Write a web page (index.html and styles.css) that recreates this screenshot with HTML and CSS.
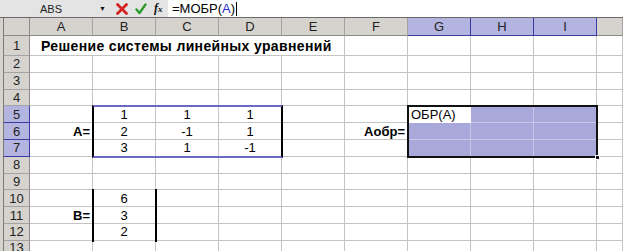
FILE: index.html
```html
<!DOCTYPE html>
<html>
<head>
    <title>Решение системы линейных уравнений</title>
    <link rel="stylesheet" href="styles.css">
</head>
<body>
    <div class="app">
        <!-- Formula bar -->
        <div class="formula-bar">
            <div class="name-box">ABS</div>
            <span class="drop">&#9660;</span>
            <svg class="btn-icon" width="12" height="12" viewBox="0 0 12 12">
                <path d="M1.5 1.5 L10.5 10.5 M10.5 1.5 L1.5 10.5" stroke="#d42222" stroke-width="2.8" stroke-linecap="round"/>
            </svg>
            <svg class="btn-icon" width="12" height="12" viewBox="0 0 12 12">
                <path d="M1.5 6.5 L4.5 10 L10.5 1.5" stroke="#2c9a2c" stroke-width="2.4" fill="none" stroke-linecap="round" stroke-linejoin="round"/>
            </svg>
            <span class="fx">f<small>x</small></span>
            <div class="formula">=МОБР(<span class="ref">A</span>)<span class="caret"></span></div>
        </div>

        <!-- Sheet -->
        <div class="sheet">
            <div class="grid">
                <div class="hdr corner"></div>
                <div class="hdr col">A</div>
                <div class="hdr col">B</div>
                <div class="hdr col">C</div>
                <div class="hdr col">D</div>
                <div class="hdr col">E</div>
                <div class="hdr col">F</div>
                <div class="hdr col active">G</div>
                <div class="hdr col active">H</div>
                <div class="hdr col active">I</div>
                <div class="hdr col"></div>

                <div class="hdr row">1</div>
                <div class="cell title">Решение системы линейных уравнений</div>
                <div class="cell"></div><div class="cell"></div><div class="cell"></div><div class="cell"></div><div class="cell"></div>

                <div class="hdr row">2</div>
                <div class="cell"></div><div class="cell"></div><div class="cell"></div><div class="cell"></div><div class="cell"></div>
                <div class="cell"></div><div class="cell"></div><div class="cell"></div><div class="cell"></div><div class="cell"></div>

                <div class="hdr row">3</div>
                <div class="cell"></div><div class="cell"></div><div class="cell"></div><div class="cell"></div><div class="cell"></div>
                <div class="cell"></div><div class="cell"></div><div class="cell"></div><div class="cell"></div><div class="cell"></div>

                <div class="hdr row">4</div>
                <div class="cell"></div><div class="cell"></div><div class="cell"></div><div class="cell"></div><div class="cell"></div>
                <div class="cell"></div><div class="cell"></div><div class="cell"></div><div class="cell"></div><div class="cell"></div>

                <div class="hdr row active">5</div>
                <div class="cell"></div>
                <div class="cell num">1</div><div class="cell num">1</div><div class="cell num">1</div>
                <div class="cell"></div><div class="cell"></div>
                <div class="cell current">ОБР(A)</div><div class="cell sel"></div><div class="cell sel"></div>
                <div class="cell"></div>

                <div class="hdr row active">6</div>
                <div class="cell label">A=</div>
                <div class="cell num">2</div><div class="cell num">-1</div><div class="cell num">1</div>
                <div class="cell"></div>
                <div class="cell label">Аобр=</div>
                <div class="cell sel"></div><div class="cell sel"></div><div class="cell sel"></div>
                <div class="cell"></div>

                <div class="hdr row active">7</div>
                <div class="cell"></div>
                <div class="cell num">3</div><div class="cell num">1</div><div class="cell num">-1</div>
                <div class="cell"></div><div class="cell"></div>
                <div class="cell sel"></div><div class="cell sel"></div><div class="cell sel"></div>
                <div class="cell"></div>

                <div class="hdr row">8</div>
                <div class="cell"></div><div class="cell"></div><div class="cell"></div><div class="cell"></div><div class="cell"></div>
                <div class="cell"></div><div class="cell"></div><div class="cell"></div><div class="cell"></div><div class="cell"></div>

                <div class="hdr row">9</div>
                <div class="cell"></div><div class="cell"></div><div class="cell"></div><div class="cell"></div><div class="cell"></div>
                <div class="cell"></div><div class="cell"></div><div class="cell"></div><div class="cell"></div><div class="cell"></div>

                <div class="hdr row">10</div>
                <div class="cell"></div><div class="cell num">6</div><div class="cell"></div><div class="cell"></div><div class="cell"></div>
                <div class="cell"></div><div class="cell"></div><div class="cell"></div><div class="cell"></div><div class="cell"></div>

                <div class="hdr row">11</div>
                <div class="cell label">B=</div><div class="cell num">3</div><div class="cell"></div><div class="cell"></div><div class="cell"></div>
                <div class="cell"></div><div class="cell"></div><div class="cell"></div><div class="cell"></div><div class="cell"></div>

                <div class="hdr row">12</div>
                <div class="cell"></div><div class="cell num">2</div><div class="cell"></div><div class="cell"></div><div class="cell"></div>
                <div class="cell"></div><div class="cell"></div><div class="cell"></div><div class="cell"></div><div class="cell"></div>

                <div class="hdr row last">13</div>
                <div class="cell"></div><div class="cell"></div><div class="cell"></div><div class="cell"></div><div class="cell"></div>
                <div class="cell"></div><div class="cell"></div><div class="cell"></div><div class="cell"></div><div class="cell"></div>
            </div>

            <!-- Borders and selection drawn over the cells -->
            <div class="overlay">
                <div class="box matrix-a"></div>
                <div class="box vector-b"></div>
                <div class="box selection"><span class="handle"></span></div>
            </div>
        </div>
    </div>
</body>
</html>
```

FILE: styles.css
```css
/* Reset */
* {
    margin: 0;
    padding: 0;
    box-sizing: border-box;
}

html, body {
    width: 100%;
    height: 100%;
    overflow: hidden;
    background: #ffffff;
    font-family: "Liberation Sans", Arial, sans-serif;
    color: #000;
}

.app {
    display: flex;
    flex-direction: column;
    height: 100%;
}

/* Formula bar */
.formula-bar {
    height: 17px;
    display: flex;
    align-items: center;
    background: #e4e4e4;
    flex-shrink: 0;
}

.name-box {
    width: 99px;
    padding-left: 40px;
    font-size: 11px;
    color: #222;
}

.drop {
    font-size: 7px;
    color: #111;
    width: 17px;
}

.btn-icon {
    margin-right: 7px;
}

.fx {
    font-family: "Liberation Serif", serif;
    font-style: italic;
    font-weight: bold;
    font-size: 12px;
    width: 14px;
    color: #111;
}

.fx small {
    font-size: 9px;
}

.formula {
    flex: 1;
    height: 100%;
    background: #ffffff;
    font-size: 13px;
    line-height: 17px;
    padding-left: 4px;
    display: flex;
    align-items: center;
}

.formula .ref {
    color: #2a2ad0;
}

.caret {
    width: 1px;
    height: 14px;
    background: #000;
    margin-left: 1px;
}

/* Sheet */
.sheet {
    flex: 1;
    position: relative;
    border-top: 1px solid #6a6a6a;
    background: #d6d3ce;
}

.grid,
.overlay {
    display: grid;
    grid-template-columns: 27px repeat(9, 63px) 1fr;
    grid-template-rows: 18px 20px repeat(11, 16.8px) 1fr;
    padding-left: 3px;
    height: 100%;
}

.overlay {
    position: absolute;
    inset: 0;
    pointer-events: none;
}

.hdr {
    background: #d6d3ce;
    font-size: 13px;
    color: #222;
    display: flex;
    align-items: center;
    justify-content: center;
}

.hdr.corner {
    border-left: 1px solid #7a7a7a;
    border-right: 1px solid #8a8a8a;
    border-bottom: 1px solid #8a8a8a;
}

.hdr.col {
    border-right: 1px solid #a3a3a3;
    border-bottom: 1px solid #8a8a8a;
}

.hdr.row {
    border-left: 1px solid #7a7a7a;
    border-right: 1px solid #8a8a8a;
    border-bottom: 1px solid #a3a3a3;
}

.hdr.row.last {
    align-items: flex-start;
    padding-top: 1px;
    line-height: 12px;
}

.hdr.active {
    background: #b4b4e0;
    border-color: #3a3aa0;
}

.hdr.row.active {
    border-left-color: #7a7a7a;
}

.cell {
    background: #ffffff;
    border-right: 1px solid #c4c4c4;
    border-bottom: 1px solid #c4c4c4;
    font-size: 13px;
    display: flex;
    align-items: center;
    white-space: nowrap;
    padding: 0 2px;
}

.cell.num {
    justify-content: center;
}

.cell.label {
    justify-content: flex-end;
    font-weight: bold;
}

.cell.title {
    grid-column: span 5;
    font-weight: bold;
    font-size: 14px;
    letter-spacing: 0.35px;
    padding-left: 11px;
}

.cell.sel {
    background: #a8a8da;
    border-color: #c6c6e6;
}

.cell.current {
    background: #ffffff;
    border-color: #ffffff;
    padding-left: 3px;
}

/* Borders over the cells */
.box {
    margin: -1px;
}

.matrix-a {
    grid-column: 3 / 6;
    grid-row: 6 / 9;
    border-left: 2px solid #000;
    border-right: 2px solid #000;
    border-top: 2px solid #6a6ac4;
    border-bottom: 2px solid #6a6ac4;
}

.vector-b {
    grid-column: 3 / 4;
    grid-row: 11 / 14;
    border-left: 2px solid #000;
    border-right: 2px solid #000;
}

.selection {
    grid-column: 8 / 11;
    grid-row: 6 / 9;
    border: 2px solid #111;
    position: relative;
}

.handle {
    position: absolute;
    right: -4px;
    bottom: -4px;
    width: 5px;
    height: 5px;
    background: #111;
    border: 1px solid #fff;
}
```
